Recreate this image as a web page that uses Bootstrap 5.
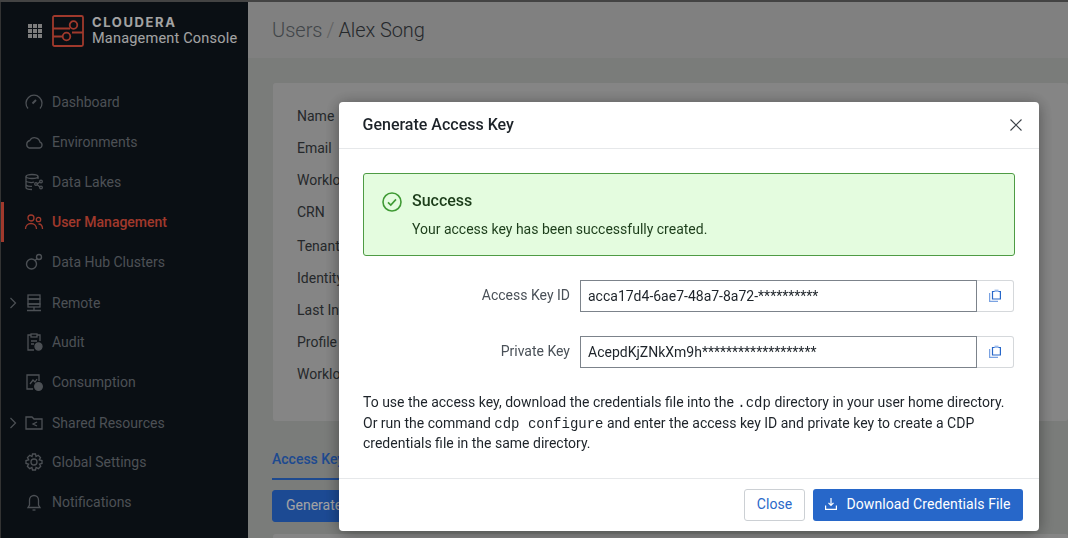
<!DOCTYPE html>
<html lang="en">
<head>
  <meta charset="UTF-8" />
  <meta name="viewport" content="width=device-width, initial-scale=1.0"/>
  <title>Users | Management Console</title>
  <link href="https://cdn.jsdelivr.net/npm/bootstrap@5.3.0/dist/css/bootstrap.min.css" rel="stylesheet">
  <style>
    html, body {
      height: 100%;
      overflow: hidden;
    }
    body {
      background-color: #bfc2bf;
      font-family: Roboto, "Liberation Sans", sans-serif;
      font-size: 14px;
      color: #1d2329;
    }
    .modal-backdrop.show {
      opacity: .36;
    }
    .page-wrap {
      height: 538px;
      overflow: hidden;
      border-top: 2px solid #6a6a6a;
    }
    .side-nav {
      width: 248px;
      flex: 0 0 248px;
      background-color: #101820;
      border-left: 1px solid #505050;
    }
    .brand-row {
      height: 58px;
      padding-left: 26px;
    }
    .brand-title {
      font-family: Inter, "Liberation Sans", sans-serif;
      font-weight: 700;
      font-size: 13px;
      line-height: 14px;
      letter-spacing: 1.600px;
      color: #fff;
      margin-top: -1px;
      margin-bottom: 1px;
    }
    .brand-sub {
      font-size: 14.5px;
      line-height: 17px;
      color: #fff;
      letter-spacing: .2px;
    }
    .side-menu {
      padding-top: 22px;
    }
    .side-item {
      height: 40px;
      padding-left: 23px;
      color: #787e85;
      position: relative;
    }
    .side-item svg.ico {
      width: 20px;
      height: 20px;
      margin-right: 8px;
      flex: none;
    }
    .side-item.has-caret {
      padding-top: 2px;
    }
    .side-item.is-active {
      color: #fa5a45;
      font-weight: 500;
    }
    .side-item.is-active::before {
      content: "";
      position: absolute;
      left: 0;
      top: 0;
      bottom: 0;
      width: 3px;
      background-color: #fa5a45;
    }
    .side-caret {
      position: absolute;
      left: 8px;
      top: 15px;
      width: 8px;
      height: 12px;
    }
    .top-head {
      height: 56px;
      padding-left: 24px;
      background-color: #c8c8c8;
      font-size: 20px;
      font-weight: 300;
      color: #3a4046;
    }
    .top-head .crumb {
      color: #666c72;
    }
    .top-head .crumb-sep {
      color: #9a9a9a;
      margin: 0 4px;
    }
    .top-head .crumb-name {
      letter-spacing: -.1px;
    }
    .main-pane {
      padding: 25px 0 0 24px;
    }
    .info-box {
      margin-left: 1px;
      background-color: #d1d1d1;
      height: 338px;
      padding: 17px 0 0 24px;
      border-radius: 3px;
      color: #3a3f44;
    }
    .info-line {
      height: 32px;
      line-height: 32px;
    }
    .info-line.is-tall {
      height: 34px;
    }
    .tab-link {
      display: inline-block;
      margin-top: 28px;
      padding-bottom: 8px;
      font-weight: 500;
      color: #3074e0;
      border-bottom: 2px solid #3074e0;
      width: 90px;
      white-space: nowrap;
    }
    .gen-btn {
      display: block;
      margin-top: 10px;
      height: 32px;
      padding: 0 13px 1px;
      font-size: 14px;
      background-color: #2c74e7;
      border-color: #2c74e7;
      --bs-btn-border-radius: 3px;
    }
    .next-box {
      margin: 12px 0 0 1px;
      height: 4px;
      background-color: #d1d1d1;
      border-radius: 3px 3px 0 0;
    }
    .modal-dialog.key-dialog {
      max-width: 700px;
      width: 700px;
      margin: 102px 29px 0 339px;
    }
    .key-dialog .modal-content {
      border: 0;
      border-radius: 4px;
      box-shadow: 0 2px 16px rgba(0,0,0,.4);
    }
    .key-dialog .modal-header {
      height: 47px;
      padding: 0 15px 0 23.500px;
      border-bottom: 1px solid #e6e8ea;
    }
    .key-dialog .modal-title {
      font-size: 16px;
      font-weight: 500;
      color: #1d2329;
    }
    .x-btn {
      background: none;
      border: 0;
      padding: 0;
      width: 16px;
      height: 16px;
      display: flex;
    }
    .key-dialog .modal-body {
      padding: 24px 24px 0;
      height: 329px;
    }
    .ok-alert {
      height: 83px;
      margin-bottom: 24px;
      padding: 16px 18px;
      background-color: #e4fcdf;
      border: 1px solid #4e9b44;
      border-radius: 3px;
      color: #1c3d1a;
    }
    .ok-icon {
      margin: 2px 10px 0 0;
      flex: none;
    }
    .ok-alert .ok-title {
      font-size: 16px;
      font-weight: 500;
      line-height: 22px;
      margin-bottom: 7px;
    }
    .ok-alert .ok-text {
      line-height: 20px;
    }
    .key-row {
      height: 32px;
      margin-bottom: 24px;
    }
    .key-label {
      width: 207px;
      margin: 0 10px 2px 0;
      text-align: right;
      color: #4a5158;
    }
    .key-group {
      width: 434px;
    }
    .key-input {
      height: 32px;
      padding: 0 7px;
      font-size: 14px;
      color: #1d2329;
      border: 1px solid #7c838b;
      border-radius: 0;
    }
    .copy-btn {
      width: 38px;
      height: 32px;
      padding: 0 0 2px;
      background-color: #fff;
      border: 1px solid #d5d8db;
      border-left: 0;
      border-radius: 0 3px 3px 0;
    }
    .hint-text {
      margin-top: 23px;
      line-height: 20.5px;
      color: #1d2329;
    }
    .hint-text code {
      font-family: "Liberation Mono", monospace;
      font-size: 14px;
      line-height: 1;
      color: #1d2329;
    }
    .key-dialog .modal-footer {
      height: 53px;
      padding: 0 16px 0 0;
      border-top: 1px solid #e6e8ea;
    }
    .key-dialog .modal-footer > * {
      margin: 0;
    }
    .btn-close-key {
      height: 32px;
      width: 61px;
      padding: 0 0 2px;
      font-size: 14px;
      letter-spacing: .1px;
      color: #2a68c9;
      background-color: #fff;
      border: 1px solid #ccd0d4;
      border-radius: 3px;
    }
    .btn-download {
      height: 32px;
      width: 210px;
      margin-left: 8px !important;
      padding: 0 0 2px;
      font-size: 14px;
      letter-spacing: .1px;
      color: #fff;
      background-color: #2767c9;
      border: 0;
      border-radius: 3px;
    }
    .dl-icon {
      margin-right: 9px;
      flex: none;
    }
  </style>
</head>
<body>

  <div class="page-wrap d-flex">
    <!-- Sidebar -->
    <nav class="side-nav">
      <div class="brand-row d-flex align-items-center">
        <svg width="16" height="16" viewBox="0 0 16 16" fill="#c4c4c4" class="me-2 flex-shrink-0">
          <rect x="1" y="1" width="4" height="4"/><rect x="6" y="1" width="4" height="4"/><rect x="11" y="1" width="4" height="4"/>
          <rect x="1" y="6" width="4" height="4"/><rect x="6" y="6" width="4" height="4"/><rect x="11" y="6" width="4" height="4"/>
          <rect x="1" y="11" width="4" height="4"/><rect x="6" y="11" width="4" height="4"/><rect x="11" y="11" width="4" height="4"/>
        </svg>
        <svg width="32" height="32" viewBox="0 0 32 32" fill="none" stroke="#fa5a45" stroke-width="1.800" class="flex-shrink-0" style="margin:0 8px 0 1px">
          <rect x="1" y="1" width="30" height="30" rx="1.500"/>
          <path d="M1 13.500H18M1 21.500H10M20 17.500H31"/>
          <circle cx="21.500" cy="10" r="3.800"/>
          <circle cx="14.500" cy="21.500" r="3.800"/>
        </svg>
        <div>
          <div class="brand-title">CLOUDERA</div>
          <div class="brand-sub">Management Console</div>
        </div>
      </div>
      <div class="side-menu">
        <div class="side-item d-flex align-items-center">
          <svg class="ico" viewBox="0 0 20 20" fill="none" stroke="currentColor" stroke-width="1.300"><path d="M4 16.500A8 8 0 1 1 16 16.500"/><path d="M8.500 11.500L12 8" stroke-width="2"/></svg>Dashboard
        </div>
        <div class="side-item d-flex align-items-center">
          <svg class="ico" viewBox="0 0 20 20" fill="none" stroke="currentColor" stroke-width="1.300"><path d="M5 16H15.500A3 3 0 0 0 16 10.200A5.500 5.500 0 0 0 5.800 8.500A4 4 0 0 0 5 16Z"/></svg>Environments
        </div>
        <div class="side-item d-flex align-items-center">
          <svg class="ico" viewBox="0 0 20 20" fill="none" stroke="currentColor" stroke-width="1.300"><ellipse cx="8" cy="4.500" rx="6" ry="2"/><path d="M2 4.500V15.500C2 16.600 4.500 17.500 8 17.500M14 4.500V7M2 9C3 10.500 8 11 10 10M2 13C3 14 6 14.500 8 14.300"/><circle cx="12" cy="12" r="1.300"/><circle cx="17" cy="9.500" r="1.300"/><circle cx="17" cy="15.500" r="1.300"/><path d="M13 12L16 10M13 12.500L16 15"/></svg>Data Lakes
        </div>
        <div class="side-item is-active d-flex align-items-center">
          <svg class="ico" viewBox="0 0 20 20" fill="none" stroke="currentColor" stroke-width="1.300"><circle cx="7" cy="6" r="3"/><path d="M1.500 17C1.500 13.500 4 11.500 7 11.500S12.500 13.500 12.500 17"/><circle cx="14.500" cy="7.500" r="2.200"/><path d="M14.500 12C16.800 12 18.500 14 18.500 17"/></svg>User Management
        </div>
        <div class="side-item d-flex align-items-center">
          <svg class="ico" viewBox="0 0 20 20" fill="none" stroke="currentColor" stroke-width="1.400"><circle cx="7.500" cy="12" r="5"/><circle cx="15" cy="5" r="2.500"/><path d="M11 8.500L13 6.800"/></svg>Data Hub Clusters
        </div>
        <div class="side-item has-caret d-flex align-items-center">
          <svg class="side-caret" viewBox="0 0 8 12" fill="none" stroke="currentColor" stroke-width="1.200"><path d="M1.500 1L6.500 6L1.500 11"/></svg>
          <svg class="ico" viewBox="0 0 20 20" fill="none" stroke="currentColor" stroke-width="1.300"><rect x="4" y="2" width="12" height="4"/><rect x="4" y="6" width="12" height="5"/><rect x="4" y="11" width="12" height="3"/><path d="M10 14V17M3 17.500H17"/></svg>Remote
        </div>
        <div class="side-item d-flex align-items-center">
          <svg class="ico" viewBox="0 0 20 20" fill="none" stroke="currentColor" stroke-width="1.300"><path d="M7 3H4V18H10M13 3H16V9"/><rect x="7" y="2" width="6" height="3"/><path d="M7 9H13M7 12H10"/><circle cx="14.500" cy="14.500" r="3.500" fill="currentColor"/></svg>Audit
        </div>
        <div class="side-item d-flex align-items-center">
          <svg class="ico" viewBox="0 0 20 20" fill="none" stroke="currentColor" stroke-width="1.300"><path d="M9 17H3V3H15V9"/><path d="M6 12L9 8L11 10L13 7"/><circle cx="14.500" cy="14.500" r="3.800" fill="currentColor"/></svg>Consumption
        </div>
        <div class="side-item has-caret d-flex align-items-center">
          <svg class="side-caret" viewBox="0 0 8 12" fill="none" stroke="currentColor" stroke-width="1.200"><path d="M1.500 1L6.500 6L1.500 11"/></svg>
          <svg class="ico" viewBox="0 0 20 20" fill="none" stroke="currentColor" stroke-width="1.300"><path d="M2 16V4H8L10 6H18V16Z"/><path d="M13 9L9 11L13 13"/></svg>Shared Resources
        </div>
        <div class="side-item d-flex align-items-center">
          <svg class="ico" viewBox="0 0 20 20" fill="none" stroke="currentColor" stroke-width="1.300"><circle cx="10" cy="10" r="3"/><path d="M8.500 2H11.500L12 4.500L14.200 3.300L16.500 5.600L15.300 7.800L18 8.500V11.500L15.500 12.100L16.700 14.300L14.400 16.600L12.100 15.400L11.500 18H8.500L7.900 15.400L5.700 16.600L3.400 14.300L4.600 12.100L2 11.500V8.500L4.700 7.800L3.500 5.600L5.800 3.300L8 4.500Z"/></svg>Global Settings
        </div>
        <div class="side-item d-flex align-items-center">
          <svg class="ico" viewBox="0 0 20 20" fill="none" stroke="currentColor" stroke-width="1.300"><path d="M4 15.500H16L14.500 13V8A4.500 4.500 0 0 0 5.500 8V13Z"/><path d="M8.500 18H11.500"/></svg>Notifications
        </div>
      </div>
    </nav>

    <!-- Main content behind the dialog -->
    <div class="flex-grow-1">
      <div class="top-head d-flex align-items-center">
        <span class="crumb">Users</span><span class="crumb-sep">/</span><span class="crumb-name">Alex Song</span>
      </div>
      <div class="main-pane">
        <div class="info-box">
          <div class="info-line">Name</div>
          <div class="info-line">Email</div>
          <div class="info-line">Workload</div>
          <div class="info-line is-tall">CRN</div>
          <div class="info-line">Tenant</div>
          <div class="info-line">Identity</div>
          <div class="info-line">Last Interaction</div>
          <div class="info-line">Profile</div>
          <div class="info-line">Workload</div>
        </div>
        <a class="tab-link text-decoration-none">Access Keys</a>
        <button class="btn btn-primary gen-btn">Generate Access Key</button>
        <div class="next-box"></div>
      </div>
    </div>
  </div>

  <div class="modal-backdrop show"></div>

  <!-- Generate Access Key dialog -->
  <div class="modal d-block" tabindex="-1">
    <div class="modal-dialog key-dialog">
      <div class="modal-content">
        <div class="modal-header">
          <h5 class="modal-title">Generate Access Key</h5>
          <button type="button" class="x-btn ms-auto" aria-label="Close">
            <svg width="16" height="16" viewBox="0 0 16 16" fill="none" stroke="#3a4047" stroke-width="1.100"><path d="M2.500 2.500L13.500 13.500M13.500 2.500L2.500 13.500"/></svg>
          </button>
        </div>
        <div class="modal-body">
          <div class="ok-alert d-flex">
            <svg class="ok-icon" width="20" height="20" viewBox="0 0 20 20" fill="none" stroke="#3f9a34" stroke-width="1.600">
              <circle cx="10" cy="10" r="9"/>
              <path d="M6 10.300L8.800 13L14 7.400"/>
            </svg>
            <div>
              <div class="ok-title">Success</div>
              <div class="ok-text">Your access key has been successfully created.</div>
            </div>
          </div>

          <div class="key-row d-flex align-items-center">
            <label class="key-label">Access Key ID</label>
            <div class="input-group key-group flex-nowrap">
              <input type="text" class="form-control key-input" value="acca17d4-6ae7-48a7-8a72-**********" readonly />
              <button class="copy-btn d-flex align-items-center justify-content-center" type="button" aria-label="Copy">
                <svg width="12" height="13" viewBox="0 0 12 13" fill="none" stroke="#2767c9" stroke-width="1.200"><path d="M3.500 2.500H11.400V10H3.500Z"/><path d="M.6 4V12.400H9" stroke="#7ba3e2" stroke-width="1.300"/><path d="M5.500 .6H9.500V3H5.500Z" fill="#9dbcec" stroke="none"/></svg>
              </button>
            </div>
          </div>

          <div class="key-row d-flex align-items-center">
            <label class="key-label">Private Key</label>
            <div class="input-group key-group flex-nowrap">
              <input type="text" class="form-control key-input" value="AcepdKjZNkXm9h*******************" readonly />
              <button class="copy-btn d-flex align-items-center justify-content-center" type="button" aria-label="Copy">
                <svg width="12" height="13" viewBox="0 0 12 13" fill="none" stroke="#2767c9" stroke-width="1.200"><path d="M3.500 2.500H11.400V10H3.500Z"/><path d="M.6 4V12.400H9" stroke="#7ba3e2" stroke-width="1.300"/><path d="M5.500 .6H9.500V3H5.500Z" fill="#9dbcec" stroke="none"/></svg>
              </button>
            </div>
          </div>

          <div class="hint-text">
            To use the access key, download the credentials file into the <code>.cdp</code> directory in your user home directory.<br>
            Or run the command <code>cdp configure</code> and enter the access key ID and private key to create a CDP<br>
            credentials file in the same directory.
          </div>
        </div>
        <div class="modal-footer">
          <button type="button" class="btn-close-key">Close</button>
          <button type="button" class="btn-download d-flex align-items-center justify-content-center">
            <svg class="dl-icon" width="12" height="12" viewBox="0 0 12 12" fill="none" stroke="#fff" stroke-width="1.200"><path d="M6 0V7M3.500 4.800L6 7.300L8.500 4.800"/><path d="M.6 7.500V11.400H11.400V7.500"/></svg>
            Download Credentials File
          </button>
        </div>
      </div>
    </div>
  </div>

  <script src="https://cdn.jsdelivr.net/npm/bootstrap@5.3.0/dist/js/bootstrap.bundle.min.js"></script>
</body>
</html>
